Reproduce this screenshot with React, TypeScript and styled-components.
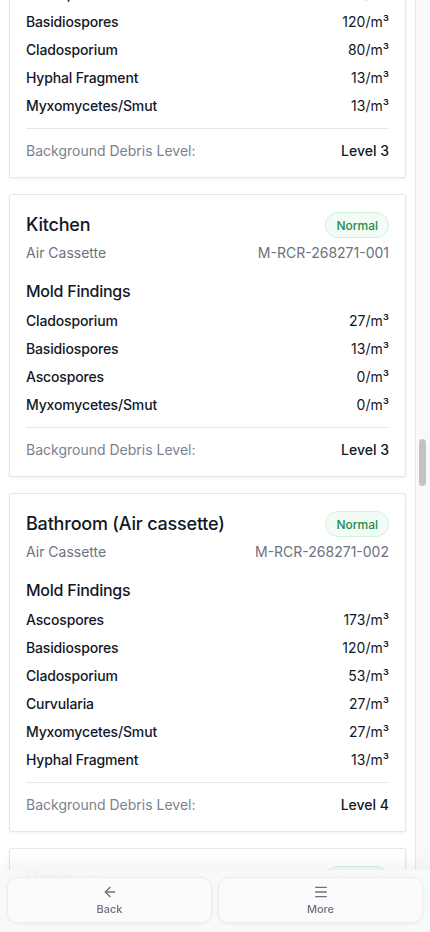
import React, { useCallback, useLayoutEffect, useRef, useState } from 'react';
import styled, { createGlobalStyle } from 'styled-components';
import { ArrowLeft, Menu } from 'lucide-react';

type Finding = { name: string; count: number };
type Sample = {
  room: string;
  type: string;
  id: string;
  status: 'Normal' | 'Elevated';
  findings: Finding[];
  debris: number;
};

const GlobalStyle = createGlobalStyle`
  * { box-sizing: border-box; }
  html, body { margin: 0; padding: 0; height: 100%; background: #ffffff; overflow: hidden; }
  body {
    font-family: Inter, "Noto Sans", "Liberation Sans", sans-serif;
    color: #111827;
    -webkit-font-smoothing: antialiased;
  }
  #root { height: 100%; }
`;

const Frame = styled.div`
  display: flex;
  height: 100vh;
  background: #ffffff;
`;

const Scroller = styled.main`
  flex: 1;
  min-width: 0;
  overflow-y: scroll;
  scrollbar-width: none;
  &::-webkit-scrollbar {
    display: none;
  }
`;

const Rail = styled.div`
  position: relative;
  flex: 0 0 15px;
  background: #f9f9f9;
  border-left: 1px solid #e7e7e7;
`;

const Thumb = styled.div`
  position: absolute;
  left: 3px;
  right: 4px;
  border-radius: 4px;
  background: #c3c3c3;
`;

const List = styled.div`
  display: flex;
  flex-direction: column;
  gap: 16px;
  padding: 9px 9px 88px;
`;

const Card = styled.section`
  background: #ffffff;
  border: 1px solid #e6e7ea;
  border-radius: 2px;
  box-shadow: 0 1px 3px rgba(17, 24, 39, 0.06);
  padding: 16px;
`;

const HeaderRow = styled.div`
  display: flex;
  align-items: center;
  justify-content: space-between;
  gap: 12px;
`;

const Title = styled.h3`
  margin: 0;
  font-size: 18px;
  line-height: 28px;
  font-weight: 500;
  letter-spacing: -0.2px;
  color: #111827;
`;

const Badge = styled.span<{ $tone: 'Normal' | 'Elevated' }>`
  display: inline-flex;
  align-items: center;
  height: 26px;
  padding: 0 10px;
  border-radius: 999px;
  font-size: 12px;
  font-weight: 500;
  border: 1px solid ${(p) => (p.$tone === 'Normal' ? '#d3f1dd' : '#fde2b3')};
  background: ${(p) => (p.$tone === 'Normal' ? '#f2fcf5' : '#fffbeb')};
  color: ${(p) => (p.$tone === 'Normal' ? '#1f8a4c' : '#b45309')};
`;

const SubRow = styled.div`
  display: flex;
  justify-content: space-between;
  margin-top: 4px;
  font-size: 14px;
  line-height: 20px;
  color: #6b7280;
`;

const SectionTitle = styled.h4`
  margin: 16px 0 8px;
  font-size: 16px;
  line-height: 24px;
  font-weight: 500;
  letter-spacing: -0.25px;
  color: #111827;
`;

const Rows = styled.div`
  display: flex;
  flex-direction: column;
  gap: 8px;
`;

const Row = styled.div`
  display: flex;
  justify-content: space-between;
  font-size: 14px;
  line-height: 20px;
  color: #111827;
`;

const RowName = styled.span`
  font-weight: 500;
  letter-spacing: -0.15px;
`;

const RowValue = styled.span`
  font-weight: 400;
`;

const Footer = styled.div`
  display: flex;
  justify-content: space-between;
  margin-top: 12px;
  padding-top: 12px;
  border-top: 1px solid #e5e7eb;
  font-size: 14px;
  line-height: 20px;
`;

const FooterLabel = styled.span`
  color: #7a8290;
`;

const FooterValue = styled.span`
  color: #111827;
  font-weight: 500;
`;

const BottomBar = styled.nav`
  position: fixed;
  left: 0;
  right: 0;
  bottom: 0;
  height: 62px;
  padding: 7px 7px 9px;
  display: grid;
  grid-template-columns: 1fr 1fr;
  gap: 6px;
  background: rgba(248, 249, 249, 0.94);
  backdrop-filter: blur(12px);
  box-shadow: 0 -6px 18px rgba(17, 24, 39, 0.05);
`;

const NavButton = styled.button`
  display: flex;
  flex-direction: column;
  align-items: center;
  justify-content: center;
  gap: 2px;
  border: 1px solid #ebeced;
  border-radius: 10px;
  background: rgba(252, 252, 252, 0.95);
  box-shadow: 0 1px 3px rgba(17, 24, 39, 0.06);
  color: #6b7280;
  font-family: Inter, "Noto Sans", sans-serif;
  font-size: 11px;
  line-height: 14px;
  font-weight: 500;
  padding: 0;
  cursor: pointer;
`;

const SPORES = [
  'Ascospores',
  'Basidiospores',
  'Cladosporium',
  'Penicillium/Aspergillus',
  'Curvularia',
  'Alternaria',
  'Hyphal Fragment',
  'Myxomycetes/Smut',
  'Chaetomium',
  'Epicoccum',
  'Pithomyces',
];

const ROOMS = [
  'Living Room',
  'Master Bedroom',
  'Basement',
  'Attic',
  'Hallway',
  'Guest Bedroom',
  'Laundry Room',
  'Office',
  'Dining Room',
  'Crawlspace',
  'Garage',
  'Outdoor (Control)',
];

const makeSample = (i: number, report: number): Sample => {
  const n = 3 + ((i * 7) % 5);
  const counts = [213, 173, 147, 120, 93, 80, 53, 40, 27, 13, 13, 0];
  const findings: Finding[] = Array.from({ length: n }, (_, k) => ({
    name: SPORES[(i * 3 + k * 2) % SPORES.length],
    count: counts[(k * 2 + (i % 3)) % counts.length],
  })).sort((a, b) => b.count - a.count);
  return {
    room: ROOMS[i % ROOMS.length],
    type: i % 4 === 3 ? 'Swab' : 'Air Cassette',
    id: `M-RCR-${report}-00${i % 4}`,
    status: i % 9 === 4 ? 'Elevated' : 'Normal',
    findings,
    debris: 2 + (i % 3),
  };
};

const BEFORE: Sample[] = Array.from({ length: 26 }, (_, i) =>
  makeSample(i, 268264 + Math.floor(i / 4)),
);

const CURRENT: Sample[] = [
  {
    room: 'Outdoor',
    type: 'Air Cassette',
    id: 'M-RCR-268271-000',
    status: 'Normal',
    findings: [
      { name: 'Ascospores', count: 147 },
      { name: 'Basidiospores', count: 120 },
      { name: 'Cladosporium', count: 80 },
      { name: 'Hyphal Fragment', count: 13 },
      { name: 'Myxomycetes/Smut', count: 13 },
    ],
    debris: 3,
  },
  {
    room: 'Kitchen',
    type: 'Air Cassette',
    id: 'M-RCR-268271-001',
    status: 'Normal',
    findings: [
      { name: 'Cladosporium', count: 27 },
      { name: 'Basidiospores', count: 13 },
      { name: 'Ascospores', count: 0 },
      { name: 'Myxomycetes/Smut', count: 0 },
    ],
    debris: 3,
  },
  {
    room: 'Bathroom (Air cassette)',
    type: 'Air Cassette',
    id: 'M-RCR-268271-002',
    status: 'Normal',
    findings: [
      { name: 'Ascospores', count: 173 },
      { name: 'Basidiospores', count: 120 },
      { name: 'Cladosporium', count: 53 },
      { name: 'Curvularia', count: 27 },
      { name: 'Myxomycetes/Smut', count: 27 },
      { name: 'Hyphal Fragment', count: 13 },
    ],
    debris: 4,
  },
  {
    room: 'Bedroom',
    type: 'Air Cassette',
    id: 'M-RCR-268271-003',
    status: 'Normal',
    findings: [
      { name: 'Basidiospores', count: 93 },
      { name: 'Cladosporium', count: 40 },
      { name: 'Ascospores', count: 27 },
      { name: 'Hyphal Fragment', count: 13 },
    ],
    debris: 3,
  },
];

const AFTER: Sample[] = Array.from({ length: 26 }, (_, i) =>
  makeSample(i + 5, 268272 + Math.floor(i / 4)),
);

const ALL: Sample[] = [...BEFORE, ...CURRENT, ...AFTER];

const SampleCard = React.forwardRef<HTMLElement, { sample: Sample }>(({ sample }, ref) => (
  <Card ref={ref}>
    <HeaderRow>
      <Title>{sample.room}</Title>
      <Badge $tone={sample.status}>{sample.status}</Badge>
    </HeaderRow>
    <SubRow>
      <span>{sample.type}</span>
      <span>{sample.id}</span>
    </SubRow>
    <SectionTitle>Mold Findings</SectionTitle>
    <Rows>
      {sample.findings.map((f) => (
        <Row key={f.name}>
          <RowName>{f.name}</RowName>
          <RowValue>{f.count}/m³</RowValue>
        </Row>
      ))}
    </Rows>
    <Footer>
      <FooterLabel>Background Debris Level:</FooterLabel>
      <FooterValue>Level {sample.debris}</FooterValue>
    </Footer>
  </Card>
));

export default function App() {
  const scrollerRef = useRef<HTMLElement>(null);
  const kitchenRef = useRef<HTMLElement>(null);
  const [thumb, setThumb] = useState({ top: 0, height: 0 });

  const measure = useCallback(() => {
    const s = scrollerRef.current;
    if (!s) return;
    const view = s.clientHeight;
    const total = s.scrollHeight;
    const height = Math.max(24, (view * view) / total);
    const range = total - view;
    const top = range > 0 ? (s.scrollTop / range) * (view - height) : 0;
    setThumb({ top, height });
  }, []);

  useLayoutEffect(() => {
    const s = scrollerRef.current;
    const k = kitchenRef.current;
    if (s && k) s.scrollTop = k.offsetTop - s.offsetTop - 194;
    measure();
  }, [measure]);

  return (
    <>
      <GlobalStyle />
      <Frame>
        <Scroller ref={scrollerRef} onScroll={measure}>
          <List>
            {ALL.map((s, i) => (
              <SampleCard
                key={`${s.id}-${i}`}
                sample={s}
                ref={s.room === 'Kitchen' ? kitchenRef : undefined}
              />
            ))}
          </List>
        </Scroller>
        <Rail aria-hidden="true">
          <Thumb style={{ top: thumb.top, height: thumb.height }} />
        </Rail>
      </Frame>
      <BottomBar>
        <NavButton type="button">
          <ArrowLeft size={16} strokeWidth={2} />
          Back
        </NavButton>
        <NavButton type="button">
          <Menu size={16} strokeWidth={2} />
          More
        </NavButton>
      </BottomBar>
    </>
  );
}
